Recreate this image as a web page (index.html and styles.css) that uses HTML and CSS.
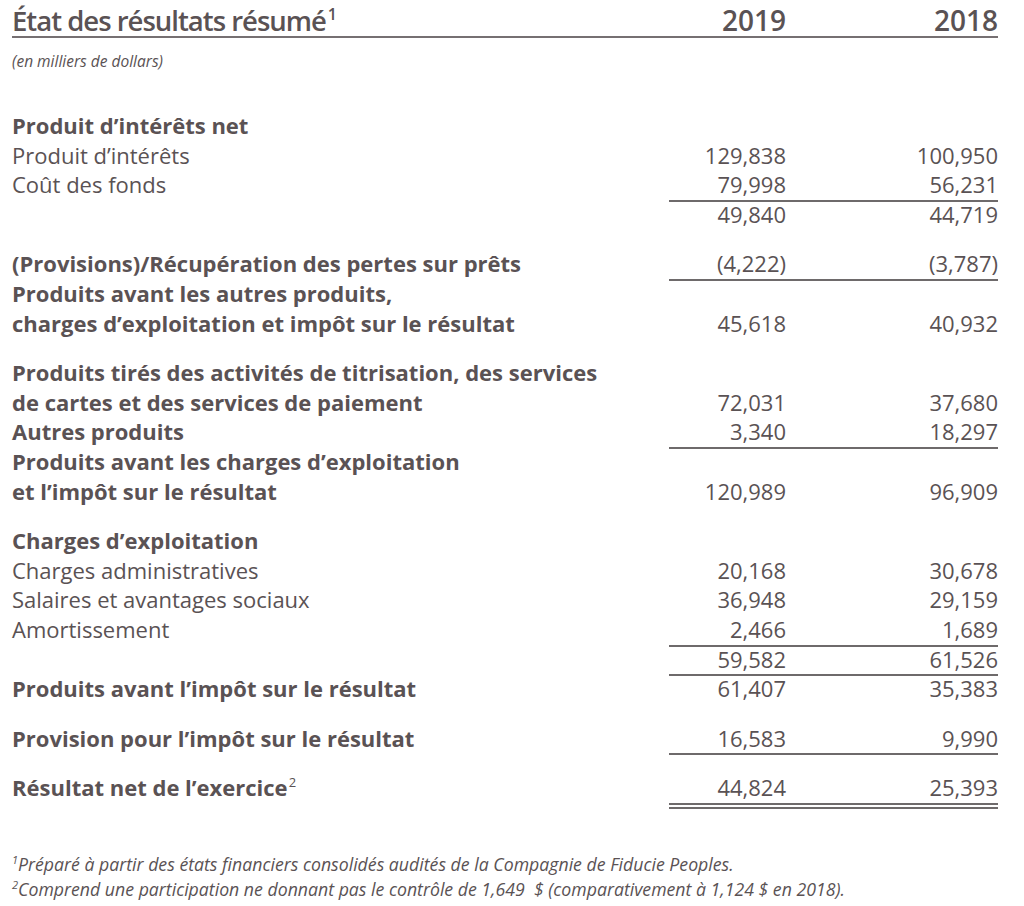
FILE: index.html
```html
<!DOCTYPE html>
<html lang="fr">
<head>
<meta charset="utf-8">
<title>État des résultats résumé</title>
<link rel="stylesheet" href="styles.css">
</head>
<body>
<div class="statement">
  <header class="head">
    <h1 class="title">État des résultats résumé<sup class="sup">1</sup></h1>
    <span class="year">2019</span>
    <span class="year">2018</span>
  </header>
  <p class="unit">(en milliers de dollars)</p>

  <div class="table">
    <div class="row"><span class="label b">Produit d’intérêts net</span><span class="num"></span><span class="num"></span></div>
    <div class="row"><span class="label">Produit d’intérêts</span><span class="num">129,838</span><span class="num">100,950</span></div>
    <div class="row"><span class="label">Coût des fonds</span><span class="num rule">79,998</span><span class="num rule">56,231</span></div>
    <div class="row"><span class="label"></span><span class="num">49,840</span><span class="num">44,719</span></div>
    <div class="gap"></div>
    <div class="row"><span class="label b">(Provisions)/Récupération des pertes sur prêts</span><span class="num rule">(4,222)</span><span class="num rule">(3,787)</span></div>
    <div class="row"><span class="label b">Produits avant les autres produits,</span><span class="num"></span><span class="num"></span></div>
    <div class="row"><span class="label b">charges d’exploitation et impôt sur le résultat</span><span class="num">45,618</span><span class="num">40,932</span></div>
    <div class="gap"></div>
    <div class="row"><span class="label b">Produits tirés des activités de titrisation, des services</span><span class="num"></span><span class="num"></span></div>
    <div class="row"><span class="label b">de cartes et des services de paiement</span><span class="num">72,031</span><span class="num">37,680</span></div>
    <div class="row"><span class="label b">Autres produits</span><span class="num rule">3,340</span><span class="num rule">18,297</span></div>
    <div class="row"><span class="label b">Produits avant les charges d’exploitation</span><span class="num"></span><span class="num"></span></div>
    <div class="row"><span class="label b">et l’impôt sur le résultat</span><span class="num">120,989</span><span class="num">96,909</span></div>
    <div class="gap"></div>
    <div class="row"><span class="label b">Charges d’exploitation</span><span class="num"></span><span class="num"></span></div>
    <div class="row"><span class="label">Charges administratives</span><span class="num">20,168</span><span class="num">30,678</span></div>
    <div class="row"><span class="label">Salaires et avantages sociaux</span><span class="num">36,948</span><span class="num">29,159</span></div>
    <div class="row"><span class="label">Amortissement</span><span class="num rule">2,466</span><span class="num rule">1,689</span></div>
    <div class="row"><span class="label"></span><span class="num rule">59,582</span><span class="num rule">61,526</span></div>
    <div class="row"><span class="label b">Produits avant l’impôt sur le résultat</span><span class="num">61,407</span><span class="num">35,383</span></div>
    <div class="gap"></div>
    <div class="row"><span class="label b">Provision pour l’impôt sur le résultat</span><span class="num rule">16,583</span><span class="num rule">9,990</span></div>
    <div class="gap"></div>
    <div class="row"><span class="label b">Résultat net de l’exercice<sup class="sup-sm">2</sup></span><span class="num rule">44,824</span><span class="num rule">25,393</span></div>
    <div class="row double"><span class="label"></span><span class="num rule"></span><span class="num rule"></span></div>
  </div>

  <div class="notes">
    <p class="note"><sup class="fn">1</sup>Préparé à partir des états financiers consolidés audités de la Compagnie de Fiducie Peoples.</p>
    <p class="note"><sup class="fn">2</sup>Comprend une participation ne donnant pas le contrôle de 1,649&nbsp; $ (comparativement à 1,124 $ en 2018).</p>
  </div>
</div>
</body>
</html>
```

FILE: styles.css
```css
html, body {
  margin: 0;
  padding: 0;
  background: #ffffff;
}

body {
  font-family: "Open Sans", "Liberation Sans", sans-serif;
  color: #5a5254;
}

.statement {
  width: 986px;
  padding: 0 0 0 12px;
}

.head {
  display: grid;
  grid-template-columns: 1fr 117px 212px;
  align-items: baseline;
  padding-top: 5px;
  border-bottom: 2px solid #767072;
}

.title {
  margin: 0;
  font-size: 27.5px;
  font-weight: 600;
  line-height: 31px;
  letter-spacing: -1px;
  white-space: nowrap;
}

.sup {
  font-size: 16px;
  font-weight: 600;
  vertical-align: 11px;
  line-height: 0;
  margin-left: 2px;
  letter-spacing: 0;
}

.year {
  font-size: 28px;
  font-weight: 600;
  line-height: 31px;
  text-align: right;
}

.unit {
  margin: 13px 0 0 0;
  font-size: 15.5px;
  font-style: italic;
  line-height: 20px;
}

.table {
  margin-top: 40px;
}

.row {
  display: grid;
  grid-template-columns: 1fr 117px 212px;
  height: 29.6px;
  line-height: 29.6px;
  font-size: 22px;
}

.gap {
  height: 20px;
}

.label {
  white-space: nowrap;
}

.b {
  font-weight: 700;
}

.num {
  text-align: right;
  box-sizing: border-box;
}

.rule {
  border-bottom: 2px solid #6e6a6b;
}

.double {
  height: 6px;
}

.sup-sm {
  font-size: 13px;
  font-weight: 400;
  vertical-align: 9px;
  line-height: 0;
  margin-left: 1px;
}

.notes {
  margin-top: 43px;
}

.note {
  margin: 0;
  font-size: 17.7px;
  font-style: italic;
  line-height: 25px;
  white-space: nowrap;
}

.fn {
  font-size: 11px;
  vertical-align: 7px;
  line-height: 0;
}
```
